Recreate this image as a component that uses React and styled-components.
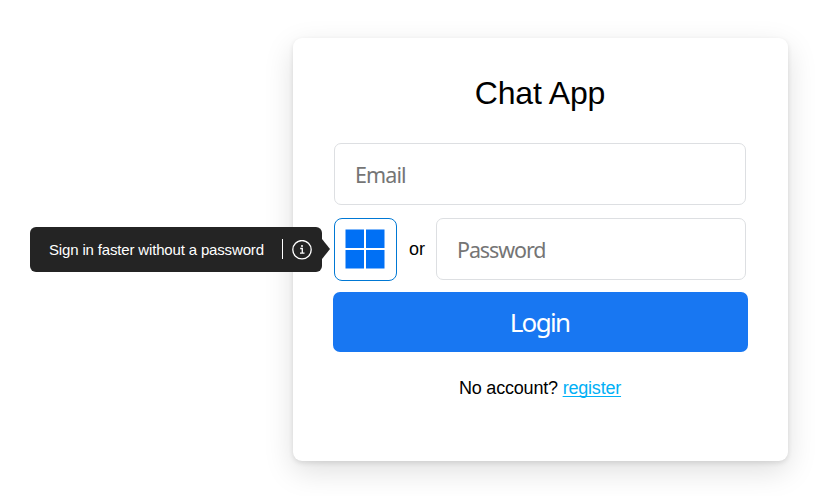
import React from "react";
import styled, { createGlobalStyle } from "styled-components";

const Global = createGlobalStyle`
  * { box-sizing: border-box; }
  body { margin: 0; background: #fff; font-family: "Liberation Sans", Arial, sans-serif; overflow: hidden; }
`;
const Page = styled.main`
  height: 496px;
  padding: 38px 46px 0 293px;
`;
const Card = styled.form`
  width: 495px;
  height: 423px;
  padding: 36px 40px 0;
  border-radius: 9px;
  background: #fff;
  box-shadow: 0 2px 5px rgba(0, 0, 0, 0.1), 0 10px 30px rgba(0, 0, 0, 0.13);
  display: flex;
  flex-direction: column;
`;
const Title = styled.h1`
  margin: 0 0 31px;
  padding-right: 1px;
  font-size: 32px;
  line-height: 38px;
  font-weight: 400;
  letter-spacing: -0.15px;
  text-align: center;
`;
const Field = styled.input`
  width: ${(p) => p.$width}px;
  height: 62px;
  margin-left: ${(p) => p.$offset || 0}px;
  padding: 0 20px;
  border: 1px solid #dddfe2;
  border-radius: 7px;
  font-family: "Noto Sans", sans-serif;
  font-size: 21.5px;
  letter-spacing: ${(p) => p.$tracking}px;
  outline: none;
  &::placeholder { color: #757575; opacity: 1; }
`;
const PasswordRow = styled.div`
  display: flex;
  margin: 13px 0 11px 1px;
`;
const HelloButton = styled.button`
  position: relative;
  width: 63px;
  height: 63px;
  padding: 0 1px 1px 0;
  border: 1px solid #0078d4;
  border-radius: 8px;
  background: #fff;
  display: grid;
  place-items: center;
`;
const Or = styled.span`
  width: 39px;
  padding-left: 1px;
  text-align: center;
  font-size: 18px;
  line-height: 62px;
`;
const Tooltip = styled.span`
  position: absolute;
  right: 74px;
  top: 8px;
  width: 292px;
  height: 45px;
  padding-left: 19px;
  border-radius: 6px;
  background: #242424;
  color: #fff;
  display: flex;
  align-items: center;
  font: 15px "Liberation Sans", sans-serif;
  letter-spacing: -0.16px;
  white-space: nowrap;
  &::after {
    content: "";
    position: absolute;
    left: 292px;
    top: 12px;
    border: solid transparent;
    border-width: 10px 0 10px 8px;
    border-left-color: #242424;
  }
`;
const TipText = styled.span`
  width: 233px;
  text-align: left;
`;
const Divider = styled.span`
  width: 1px;
  height: 20px;
  margin: 0 9px 1px 0;
  background: #fff;
`;
const Login = styled.button`
  width: 415px;
  height: 60px;
  padding: 0 2px 0 0;
  border: 0;
  border-radius: 7px;
  background: #1877f2;
  color: #fff;
  font: 26px "Noto Sans", sans-serif;
  letter-spacing: -1.7px;
`;
const Footer = styled.p`
  margin: 25px 0 0;
  padding-right: 1px;
  text-align: center;
  font-size: 18px;
  line-height: 22px;
  letter-spacing: -0.2px;
`;
const Register = styled.a`
  color: #00b0f6;
  text-decoration: underline;
  text-decoration-thickness: 1px;
  text-underline-offset: 2px;
  text-decoration-skip-ink: none;
`;

function WindowsLogo() {
  return (
    <svg width="40" height="40" viewBox="0 0 40 40" fill="#0070f5">
      <path d="M.5.5H19V19H.5zM21 .5h18.5V19H21zM.5 21H19v18.5H.5zM21 21h18.5v18.5H21z" />
    </svg>
  );
}
function InfoIcon() {
  return (
    <svg width="20" height="20" viewBox="0 0 20 20" fill="none" stroke="#fff" strokeWidth="1.3">
      <circle cx="10" cy="9.7" r="9.2" />
      <path d="M8.2 8.5h2.1v4.7M8 13.2h4.5" />
      <circle cx="10" cy="5.9" r="1" fill="#fff" stroke="none" />
    </svg>
  );
}

export default function App() {
  return (
    <>
      <Global />
      <Page>
        <Card>
          <Title>Chat App</Title>
          <Field $width={412} $offset={1} $tracking={-0.9} type="email" placeholder="Email" />
          <PasswordRow>
            <HelloButton type="button">
              <WindowsLogo />
              <Tooltip>
                <TipText>Sign in faster without a password</TipText>
                <Divider />
                <InfoIcon />
              </Tooltip>
            </HelloButton>
            <Or>or</Or>
            <Field $width={310} $tracking={-1.1} type="password" placeholder="Password" />
          </PasswordRow>
          <Login type="submit">Login</Login>
          <Footer>No account? <Register href="#">register</Register></Footer>
        </Card>
      </Page>
    </>
  );
}
